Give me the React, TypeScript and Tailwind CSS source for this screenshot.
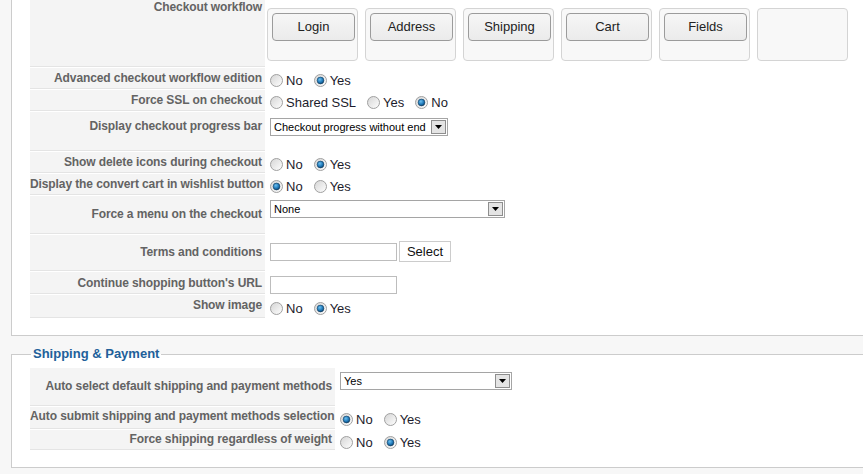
import type { ReactNode } from "react";

type Opt = { label: string; checked?: boolean };

function Radio({ checked }: { checked?: boolean }) {
  return (
    <svg width="13" height="13" viewBox="0 0 13 13" className="shrink-0">
      <defs>
        <linearGradient id="rg" x1="0" y1="0" x2="1" y2="1">
          <stop offset="0" stopColor="#d4d4d4" />
          <stop offset="1" stopColor="#ffffff" />
        </linearGradient>
        <radialGradient id="dot" cx="0.4" cy="0.35" r="0.7">
          <stop offset="0" stopColor="#6cc0f0" />
          <stop offset="0.6" stopColor="#1f78b8" />
          <stop offset="1" stopColor="#0a3d66" />
        </radialGradient>
      </defs>
      <circle cx="6.5" cy="6.5" r="6" fill="url(#rg)" stroke="#a0a0a0" strokeWidth="1" />
      {checked && <circle cx="6.5" cy="6.5" r="3.4" fill="url(#dot)" stroke="#123c5e" strokeWidth="0.6" />}
    </svg>
  );
}

function Radios({ opts }: { opts: Opt[] }) {
  return (
    <div className="flex items-center text-[13px] text-[#1c1c2c] leading-[15px]">
      {opts.map((o) => (
        <label key={o.label} className="flex items-center mr-[11px]">
          <Radio checked={o.checked} />
          <span className="ml-[3px] mt-[1px]">{o.label}</span>
        </label>
      ))}
    </div>
  );
}

function Select({ value, w }: { value: string; w: string }) {
  return (
    <div className={`flex items-center justify-between h-[18px] border border-[#a5a5a5] bg-white ${w}`}>
      <span className="pl-[3px] text-[11px] leading-[14px] text-black">{value}</span>
      <span className="mr-[1px] flex h-[14px] w-[15px] items-center justify-center border border-[#8e8e8e] bg-[#e4e4e4]">
        <svg width="7" height="4" viewBox="0 0 7 4">
          <path d="M0 0h7L3.5 4z" fill="#000" />
        </svg>
      </span>
    </div>
  );
}

function TextInput() {
  return <div className="h-[18px] w-[127px] border border-[#bdbdbd] bg-white" />;
}

const STEPS = ["Login", "Address", "Shipping", "Cart", "Fields"];

function Workflow() {
  return (
    <div className="flex gap-[7px]">
      {[...STEPS, ""].map((s, i) => (
        <div key={i} className="h-[53px] w-[91px] rounded-[4px] border border-[#d4d4d4] bg-[#f8f8f8] p-[4px]">
          {s && (
            <div className="flex h-[28px] w-[83px] items-center justify-center rounded-[4px] border border-[#9b9b9b] bg-gradient-to-b from-[#f6f6f6] to-[#ebebeb] text-[13px] text-[#222]">
              {s}
            </div>
          )}
        </div>
      ))}
    </div>
  );
}

function Row({
  label,
  h,
  lt,
  vt,
  lw,
  children,
}: {
  label: string;
  h: string;
  lt: string;
  vt: string;
  lw: string;
  children?: ReactNode;
}) {
  return (
    <div className={`flex mb-[1px] ${h}`}>
      <div
        className={`${lw} shrink-0 bg-[#f4f4f4] border-b border-[#e4e4e4] pr-[3px] text-right whitespace-nowrap text-[12px] leading-[14px] tracking-[-0.1px] font-bold text-[#636363] ${lt}`}
      >
        {label}
      </div>
      <div className={`flex-1 pl-[4px] ml-[1px] ${vt}`}>{children}</div>
    </div>
  );
}

export default function App() {
  const lw1 = "w-[235px]";
  const lw2 = "w-[305px]";
  return (
    <div className="h-[474px] w-[863px] overflow-hidden bg-[#f7f7f7] font-['Liberation_Sans',Arial,sans-serif]">
      <div className="ml-[11px] w-[860px] border-l border-r border-b border-[#cccccc] bg-white pl-[18px] pb-[16px]">
        <Row label="Checkout workflow" h="h-[67px]" lt="pt-0" vt="pt-[8px] !pl-[1px]" lw={lw1}>
          <Workflow />
        </Row>
        <Row label="Advanced checkout workflow edition" h="h-[21px]" lt="pt-[3px]" vt="pt-[4px]" lw={lw1}>
          <Radios opts={[{ label: "No" }, { label: "Yes", checked: true }]} />
        </Row>
        <Row label="Force SSL on checkout" h="h-[21px]" lt="pt-[3px]" vt="pt-[4px]" lw={lw1}>
          <Radios opts={[{ label: "Shared SSL" }, { label: "Yes" }, { label: "No", checked: true }]} />
        </Row>
        <Row label="Display checkout progress bar" h="h-[39px]" lt="pt-[7px]" vt="pt-[6px]" lw={lw1}>
          <Select value="Checkout progress without end" w="w-[178px]" />
        </Row>
        <Row label="Show delete icons during checkout" h="h-[21px]" lt="pt-[3px]" vt="pt-[4px]" lw={lw1}>
          <Radios opts={[{ label: "No" }, { label: "Yes", checked: true }]} />
        </Row>
        <Row label="Display the convert cart in wishlist button" h="h-[21px]" lt="pt-[3px]" vt="pt-[4px]" lw={lw1}>
          <Radios opts={[{ label: "No", checked: true }, { label: "Yes" }]} />
        </Row>
        <Row label="Force a menu on the checkout" h="h-[38px]" lt="pt-[11px]" vt="pt-[4px]" lw={lw1}>
          <Select value="None" w="w-[235px]" />
        </Row>
        <Row label="Terms and conditions" h="h-[36px]" lt="pt-[10px]" vt="pt-[6px]" lw={lw1}>
          <div className="flex items-center gap-[2px]">
            <TextInput />
            <div className="flex h-[21px] w-[52px] items-center justify-center border border-[#cccccc] bg-white text-[13px] text-[#111]">
              Select
            </div>
          </div>
        </Row>
        <Row label="Continue shopping button's URL" h="h-[22px]" lt="pt-[4px]" vt="pt-[4px]" lw={lw1}>
          <TextInput />
        </Row>
        <Row label="Show image" h="h-[23px]" lt="pt-[3px]" vt="pt-[5px]" lw={lw1}>
          <Radios opts={[{ label: "No" }, { label: "Yes", checked: true }]} />
        </Row>
      </div>

      <fieldset className="mt-[10px] ml-[11px] w-[860px] border border-[#cccccc] bg-white pl-[18px] pb-[16px]">
        <legend className="ml-[1px] px-[2px] text-[13px] leading-[16px] font-bold text-[#21609a]">
          Shipping &amp; Payment
        </legend>
        <div className="pt-[6px]">
          <Row label="Auto select default shipping and payment methods" h="h-[38px]" lt="pt-[11px]" vt="pt-[4px]" lw={lw2}>
            <Select value="Yes" w="w-[172px]" />
          </Row>
          <Row label="Auto submit shipping and payment methods selection" h="h-[22px]" lt="pt-[2px]" vt="pt-[4px]" lw={lw2}>
            <Radios opts={[{ label: "No", checked: true }, { label: "Yes" }]} />
          </Row>
          <Row label="Force shipping regardless of weight" h="h-[20px]" lt="pt-[2px]" vt="pt-[4px]" lw={lw2}>
            <Radios opts={[{ label: "No" }, { label: "Yes", checked: true }]} />
          </Row>
        </div>
      </fieldset>
    </div>
  );
}
